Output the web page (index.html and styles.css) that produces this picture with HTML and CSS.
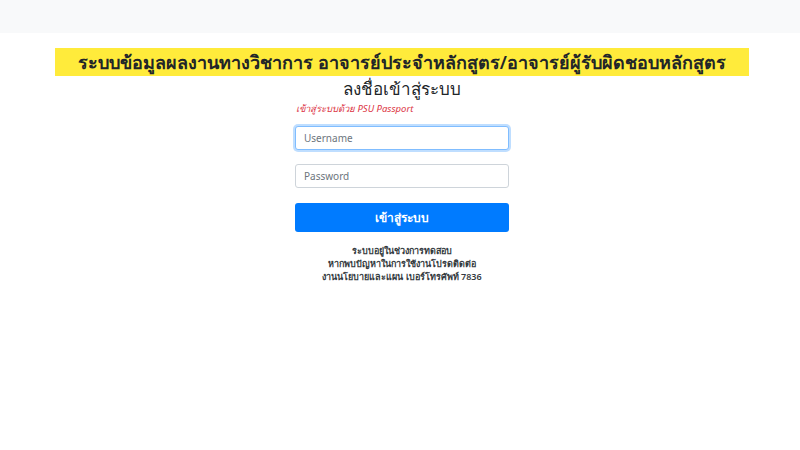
FILE: index.html
```html
<!DOCTYPE html>
<html lang="th">
<head>
    <meta charset="UTF-8">
    <meta name="viewport" content="width=device-width, initial-scale=1.0">
    <title>เข้าสู่ระบบ</title>
    <link rel="stylesheet" href="styles.css">
</head>
<body>
    <div class="topbar"></div>
    <div class="container">
        <h1 class="banner">ระบบข้อมูลผลงานทางวิชาการ อาจารย์ประจำหลักสูตร/อาจารย์ผู้รับผิดชอบหลักสูตร</h1>
        <h2 class="login-title">ลงชื่อเข้าสู่ระบบ</h2>
        <form class="login-form">
            <div class="hint">เข้าสู่ระบบด้วย PSU Passport</div>
            <input type="text" class="field field-focus" placeholder="Username">
            <input type="password" class="field" placeholder="Password">
            <button type="submit" class="btn-login">เข้าสู่ระบบ</button>
            <p class="note">ระบบอยู่ในช่วงการทดสอบ<br>หากพบปัญหาในการใช้งานโปรดติดต่อ<br>งานนโยบายและแผน เบอร์โทรศัพท์ 7836</p>
        </form>
    </div>
</body>
</html>
```

FILE: styles.css
```css
body {
    font-family: "Noto Sans", "DejaVu Sans", sans-serif;
    background-color: #fff;
    color: #212529;
    margin: 0;
}

.topbar {
    height: 33px;
    background-color: #f8f9fa;
}

.container {
    width: 694px;
    margin: 15px 0 0 55px;
}

.banner {
    background-color: #ffeb3b;
    margin: 0;
    height: 28px;
    line-height: 28px;
    font-size: 18px;
    font-weight: 600;
    text-align: center;
    white-space: nowrap;
}

.login-title {
    margin: 0;
    font-size: 17px;
    font-weight: 400;
    line-height: 26px;
    text-align: center;
}

.login-form {
    width: 214px;
    margin: 0 auto;
}

.hint {
    color: #dc3545;
    font-size: 9.5px;
    font-style: italic;
    line-height: 14px;
    margin: 0 0 0 1px;
}

.field {
    display: block;
    box-sizing: border-box;
    width: 100%;
    height: 24px;
    padding: 0 8px;
    margin-top: 14px;
    font-family: inherit;
    font-size: 10px;
    color: #495057;
    border: 1px solid #ced4da;
    border-radius: 3px;
}

.field::placeholder {
    color: #6c757d;
}

.field-focus {
    margin-top: 10px;
    border-color: #80bdff;
    box-shadow: 0 0 0 2px rgba(0, 123, 255, 0.25);
}

.btn-login {
    display: block;
    width: 100%;
    height: 29px;
    margin-top: 15px;
    background-color: #007bff;
    color: white;
    border: none;
    border-radius: 3px;
    font-family: inherit;
    font-size: 12px;
    font-weight: 600;
    cursor: pointer;
}

.note {
    margin: 12px 0 0;
    font-size: 9px;
    font-weight: 600;
    line-height: 13px;
    text-align: center;
    color: #343a40;
}
```
